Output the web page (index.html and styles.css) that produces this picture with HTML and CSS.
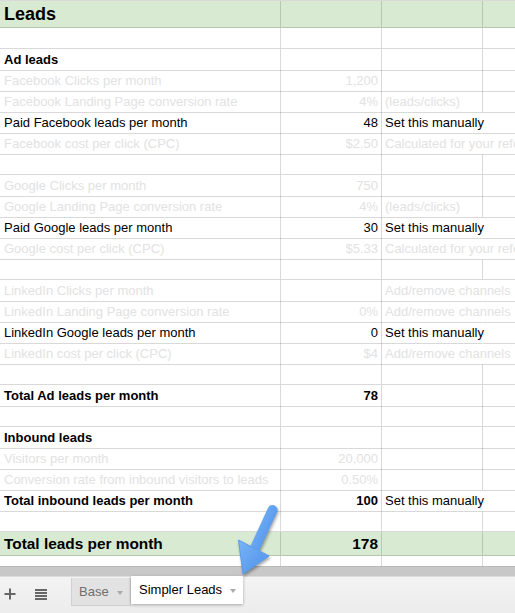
FILE: index.html
```html
<!DOCTYPE html>
<html>
<head>
<meta charset="utf-8">
<link rel="stylesheet" href="styles.css">
</head>
<body>
<div class="page">
  <div class="sheet">
    <div class="row hdr"><div class="c c1">Leads</div><div class="c c2"></div><div class="c c3"></div><div class="c c4"></div></div>
    <div class="row"><div class="c c1"></div><div class="c c2"></div><div class="c c3"></div><div class="c c4"></div></div>
    <div class="row"><div class="c c1 b">Ad leads</div><div class="c c2"></div><div class="c c3"></div><div class="c c4"></div></div>
    <div class="row fade"><div class="c c1">Facebook Clicks per month</div><div class="c c2">1,200</div><div class="c c3"></div><div class="c c4"></div></div>
    <div class="row fade"><div class="c c1">Facebook Landing Page conversion rate</div><div class="c c2">4%</div><div class="c c3">(leads/clicks)</div><div class="c c4"></div></div>
    <div class="row ov"><div class="c c1">Paid Facebook leads per month</div><div class="c c2">48</div><div class="c c3">Set this manually</div><div class="c c4"></div></div>
    <div class="row fade ov"><div class="c c1">Facebook cost per click (CPC)</div><div class="c c2">$2.50</div><div class="c c3">Calculated for your refe</div><div class="c c4"></div></div>
    <div class="row"><div class="c c1"></div><div class="c c2"></div><div class="c c3"></div><div class="c c4"></div></div>
    <div class="row fade"><div class="c c1">Google Clicks per month</div><div class="c c2">750</div><div class="c c3"></div><div class="c c4"></div></div>
    <div class="row fade"><div class="c c1">Google Landing Page conversion rate</div><div class="c c2">4%</div><div class="c c3">(leads/clicks)</div><div class="c c4"></div></div>
    <div class="row ov"><div class="c c1">Paid Google leads per month</div><div class="c c2">30</div><div class="c c3">Set this manually</div><div class="c c4"></div></div>
    <div class="row fade ov"><div class="c c1">Google cost per click (CPC)</div><div class="c c2">$5.33</div><div class="c c3">Calculated for your refe</div><div class="c c4"></div></div>
    <div class="row"><div class="c c1"></div><div class="c c2"></div><div class="c c3"></div><div class="c c4"></div></div>
    <div class="row fade ov"><div class="c c1">LinkedIn Clicks per month</div><div class="c c2"></div><div class="c c3">Add/remove channels</div><div class="c c4"></div></div>
    <div class="row fade ov"><div class="c c1">LinkedIn Landing Page conversion rate</div><div class="c c2">0%</div><div class="c c3">Add/remove channels</div><div class="c c4"></div></div>
    <div class="row ov"><div class="c c1">LinkedIn Google leads per month</div><div class="c c2">0</div><div class="c c3">Set this manually</div><div class="c c4"></div></div>
    <div class="row fade ov"><div class="c c1">LinkedIn cost per click (CPC)</div><div class="c c2">$4</div><div class="c c3">Add/remove channels</div><div class="c c4"></div></div>
    <div class="row"><div class="c c1"></div><div class="c c2"></div><div class="c c3"></div><div class="c c4"></div></div>
    <div class="row"><div class="c c1 b">Total Ad leads per month</div><div class="c c2 b">78</div><div class="c c3"></div><div class="c c4"></div></div>
    <div class="row"><div class="c c1"></div><div class="c c2"></div><div class="c c3"></div><div class="c c4"></div></div>
    <div class="row"><div class="c c1 b">Inbound leads</div><div class="c c2"></div><div class="c c3"></div><div class="c c4"></div></div>
    <div class="row fade"><div class="c c1">Visitors per month</div><div class="c c2">20,000</div><div class="c c3"></div><div class="c c4"></div></div>
    <div class="row fade"><div class="c c1">Conversion rate from inbound visitors to leads</div><div class="c c2">0.50%</div><div class="c c3"></div><div class="c c4"></div></div>
    <div class="row ov"><div class="c c1 b">Total inbound leads per month</div><div class="c c2 b">100</div><div class="c c3">Set this manually</div><div class="c c4"></div></div>
    <div class="row"><div class="c c1"></div><div class="c c2"></div><div class="c c3"></div><div class="c c4"></div></div>
    <div class="row total"><div class="c c1">Total leads per month</div><div class="c c2">178</div><div class="c c3"></div><div class="c c4"></div></div>
    <div class="row part"><div class="c c1"></div><div class="c c2"></div><div class="c c3"></div><div class="c c4"></div></div>
  </div>
  <div class="scrollbar"></div>
  <div class="tabbar">
    <svg class="plus" width="12" height="12" viewBox="0 0 12 12"><path d="M6 0.5V11.5M0.5 6H11.5" stroke="#666" stroke-width="2"/></svg>
    <span class="menu"><i></i><i></i><i></i><i></i></span>
    <div class="tab base">Base <span class="caret"></span></div>
    <div class="tab active">Simpler Leads <span class="caret"></span></div>
  </div>
  <svg class="arrow" width="515" height="613" viewBox="0 0 515 613">
    <defs>
      <linearGradient id="ag" x1="0" y1="0" x2="1" y2="1">
        <stop offset="0" stop-color="#7ab4f5"/>
        <stop offset="1" stop-color="#4b90ea"/>
      </linearGradient>
    </defs>
    <line x1="272.5" y1="510" x2="255" y2="548" stroke="url(#ag)" stroke-width="10" stroke-linecap="round"/>
    <polygon points="238.5,540 269,556 243,574" fill="url(#ag)" stroke="#5a9cee" stroke-width="1" stroke-linejoin="round"/>
  </svg>
</div>
</body>
</html>
```

FILE: styles.css
```css
html, body {
  margin: 0;
  padding: 0;
  background: #fff;
}

.page {
  position: relative;
  width: 515px;
  height: 613px;
  overflow: hidden;
  font-family: "Liberation Sans", Arial, sans-serif;
  font-size: 13px;
  color: #000;
}

.sheet {
  border-top: 1px solid rgba(0, 0, 0, 0.15);
}

.row {
  display: grid;
  grid-template-columns: 281px 101px 101px 1fr;
  height: 21px;
}

.c {
  box-sizing: border-box;
  border-right: 1px solid rgba(0, 0, 0, 0.15);
  border-bottom: 1px solid rgba(0, 0, 0, 0.15);
  padding: 1px 3px 0 4px;
  line-height: 20px;
  white-space: nowrap;
  overflow: visible;
  min-width: 0;
}

.c2 {
  text-align: right;
  padding-right: 3px;
}

.c3 {
  padding-left: 3px;
}

.c4 {
  border-right: none;
}

.b {
  font-weight: bold;
}

.fade {
  color: #e2e2e2;
}

.ov .c3 {
  border-right-color: transparent;
}

.hdr {
  height: 27px;
}

.hdr .c {
  background: #d9ead3;
  font-size: 18px;
  font-weight: bold;
  line-height: 26px;
  padding-top: 0;
}

.total {
  height: 24px;
}

.total .c {
  background: #d9ead3;
  font-size: 15.4px;
  font-weight: bold;
  line-height: 23px;
  padding-top: 0;
}

.part {
  height: 10px;
}

.part .c {
  border-bottom: none;
}

.scrollbar {
  box-sizing: border-box;
  height: 11px;
  background: #c8c8c8;
  border-top: 1px solid #b8b8b8;
  border-bottom: 1px solid #dcdcdc;
}

.tabbar {
  height: 36px;
  background: linear-gradient(#f3f3f3, #ececec);
  display: flex;
  align-items: flex-start;
  position: relative;
}

.plus {
  display: block;
  margin: 11px 0 0 4px;
}

.menu {
  display: flex;
  flex-direction: column;
  gap: 1.5px;
  margin: 12px 0 0 19px;
}

.menu i {
  display: block;
  width: 12px;
  height: 1.5px;
  background: #666;
}

.tab {
  box-sizing: border-box;
  height: 28px;
  line-height: 26px;
  font-size: 13px;
  display: flex;
  align-items: center;
  white-space: nowrap;
}

.base {
  margin: 1px 0 0 24px;
  width: 60px;
  padding-left: 7px;
  background: #e2e2e2;
  border: 1px solid #d0d0d0;
  border-top: none;
  color: #6f6f6f;
}

.base .caret {
  margin-left: 8px;
}

.active {
  margin-top: -1px;
  width: 112px;
  padding-left: 8px;
  background: #fff;
  color: #000;
  box-shadow: 0 1px 3px rgba(0, 0, 0, 0.3);
}

.active .caret {
  margin-left: 8px;
}

.caret {
  display: inline-block;
  width: 0;
  height: 0;
  border-left: 3.5px solid transparent;
  border-right: 3.5px solid transparent;
  border-top: 4px solid #aaa;
  margin-top: 2px;
}

.arrow {
  position: absolute;
  left: 0;
  top: 0;
  pointer-events: none;
  filter: drop-shadow(1px 2px 1.5px rgba(0, 0, 0, 0.35));
}
```
